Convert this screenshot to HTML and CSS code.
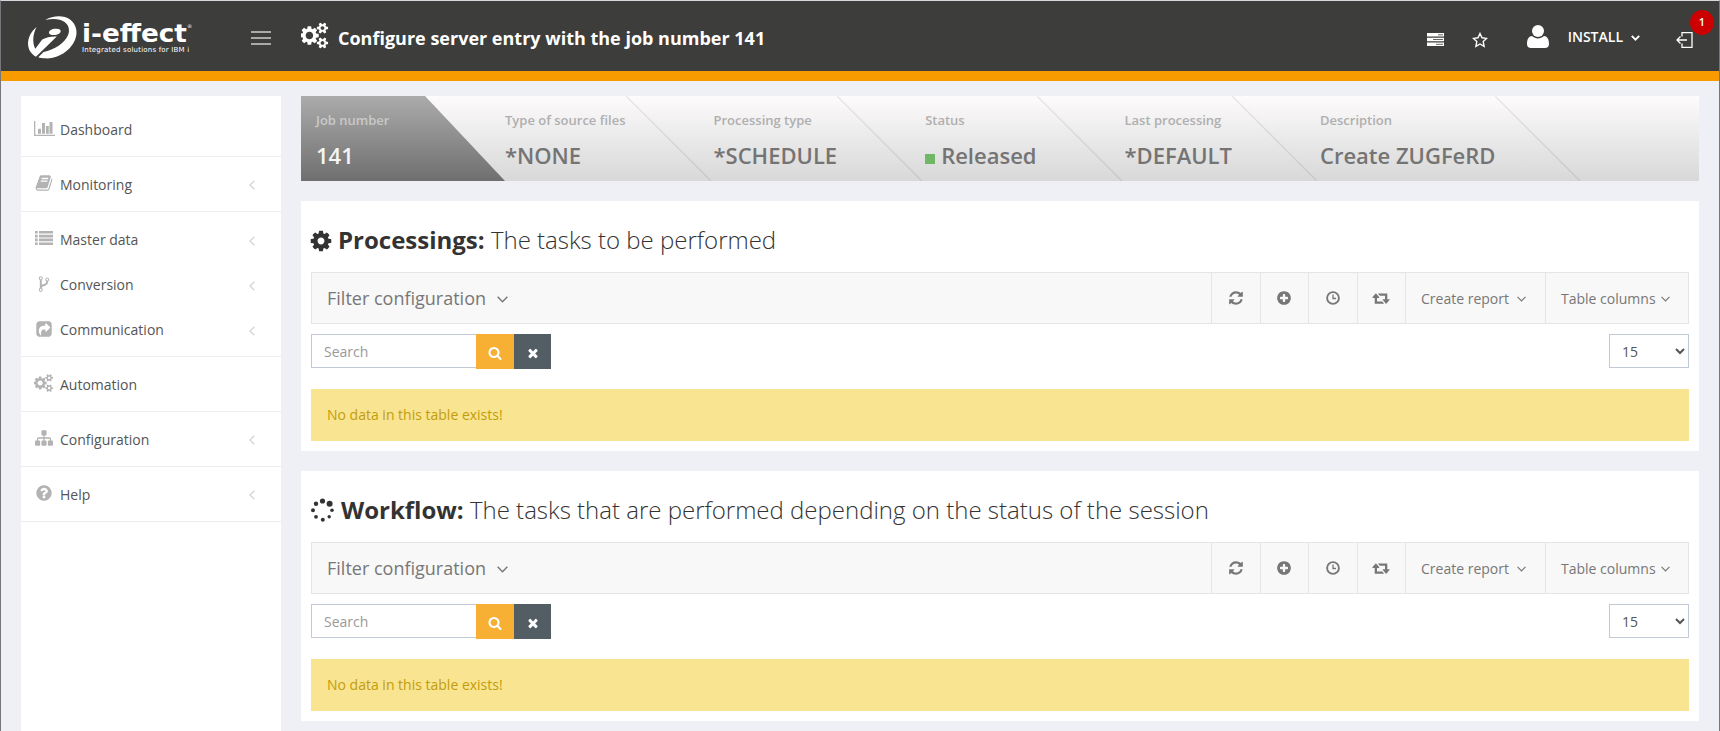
FILE: index.html
```html
<!DOCTYPE html>
<html lang="en">
<head>
    <meta charset="UTF-8">
    <meta name="viewport" content="width=device-width, initial-scale=1.0">
    <title>i-effect - Configure server entry</title>
    <link rel="stylesheet" href="styles.css">
</head>
<body>
    <svg width="0" height="0" class="sprite">
        <symbol id="cogs" viewBox="0 0 1920 1792"><path d="M832 896q0-106-75-181t-181-75-181 75-75 181 75 181 181 75 181-75 75-181zm768 512q0-52-38-90t-90-38-90 38-38 90q0 53 37.5 90.5t90.5 37.5 90.5-37.5 37.5-90.5zm0-1024q0-52-38-90t-90-38-90 38-38 90q0 53 37.5 90.5t90.5 37.5 90.5-37.5 37.5-90.5zm-384 421v185q0 10-7 19.5t-16 10.5l-155 24q-11 35-32 76 34 48 90 115 7 11 7 20 0 12-7 19-23 30-82.5 89.5t-78.5 59.5q-11 0-21-7l-115-90q-37 19-77 31-11 108-23 155-7 24-30 24h-186q-11 0-20-7.5t-10-17.5l-23-153q-34-10-75-31l-118 89q-7 7-20 7-11 0-21-8-144-133-144-160 0-9 7-19 10-14 41-53t47-61q-23-44-35-82l-152-24q-10-1-17-9.5t-7-19.5v-185q0-10 7-19.5t16-10.5l155-24q11-35 32-76-34-48-90-115-7-11-7-20 0-12 7-20 22-30 82-89t79-59q11 0 21 7l115 90q34-18 77-32 11-108 23-154 7-24 30-24h186q11 0 20 7.5t10 17.5l23 153q34 10 75 31l118-89q8-7 20-7 11 0 21 8 144 133 144 160 0 8-7 19-12 16-42 54t-45 60q23 48 34 82l152 23q10 2 17 10.5t7 19.5zm640 533v140q0 16-149 31-12 27-30 52 51 113 51 138 0 4-4 7-122 71-124 71-8 0-46-47t-52-68q-20 2-30 2t-30-2q-14 21-52 68t-46 47q-2 0-124-71-4-3-4-7 0-25 51-138-18-25-30-52-149-15-149-31v-140q0-16 149-31 13-29 30-52-51-113-51-138 0-4 4-7 4-2 35-20t59-34 30-16q8 0 46 46.5t52 67.5q20-2 30-2t30 2q51-71 92-112l6-2q4 0 124 70 4 3 4 7 0 25-51 138 17 23 30 52 149 15 149 31zm0-1024v140q0 16-149 31-12 27-30 52 51 113 51 138 0 4-4 7-122 71-124 71-8 0-46-47t-52-68q-20 2-30 2t-30-2q-14 21-52 68t-46 47q-2 0-124-71-4-3-4-7 0-25 51-138-18-25-30-52-149-15-149-31v-140q0-16 149-31 13-29 30-52-51-113-51-138 0-4 4-7 4-2 35-20t59-34 30-16q8 0 46 46.5t52 67.5q20-2 30-2t30 2q51-71 92-112l6-2q4 0 124 70 4 3 4 7 0 25-51 138 17 23 30 52 149 15 149 31z"/></symbol>
        <symbol id="cog" viewBox="0 0 1792 1792"><path d="M1152 896q0-106-75-181t-181-75-181 75-75 181 75 181 181 75 181-75 75-181zm512-109v222q0 12-8 23t-20 13l-185 28q-19 54-39 91 35 50 107 138 10 12 10 25t-9 23q-27 37-99 108t-94 71q-12 0-26-9l-138-108q-44 23-91 38-16 136-29 186-7 28-36 28h-222q-14 0-24.5-8.5t-11.5-21.5l-28-184q-49-16-90-37l-141 107q-10 9-25 9-14 0-25-11-126-114-165-168-7-10-7-23 0-12 8-23 15-21 51-66.5t54-70.5q-27-50-41-99l-183-27q-13-2-21-12.5t-8-23.5v-222q0-12 8-23t19-13l186-28q14-46 39-92-40-57-107-138-10-12-10-24 0-10 9-23 26-36 98.5-107.5t94.5-71.5q13 0 26 10l138 107q44-23 91-38 16-136 29-186 7-28 36-28h222q14 0 24.5 8.5t11.5 21.5l28 184q49 16 90 37l142-107q9-9 24-9 13 0 25 10 129 119 165 170 7 8 7 22 0 12-8 23-15 21-51 66.5t-54 70.5q26 50 41 98l183 28q13 2 21 12.5t8 23.5z"/></symbol>
        <symbol id="spinner" viewBox="0 0 24 24"><circle cx="11.5" cy="3" r="2.6"/><circle cx="18.6" cy="5.8" r="3"/><circle cx="21" cy="12.3" r="1.8"/><circle cx="18.2" cy="18.8" r="1.7"/><circle cx="11.8" cy="21.8" r="2"/><circle cx="5" cy="18.8" r="1.9"/><circle cx="2" cy="12.3" r="2"/><circle cx="5" cy="5.8" r="2.2"/></symbol>
        <symbol id="chart" viewBox="0 0 21 15"><path d="M0 0h1.3v13.7h19.7v1.3h-21zM4 7.8h3v5h-3zM8 2h3v10.8h-3zM12 5h2.8v7.8h-2.8zM15.5 1h3v11.8h-3z"/></symbol>
        <symbol id="book" viewBox="0 0 1792 1792"><path d="M1703 478q40 57 18 129l-275 906q-19 64-76.5 107.5t-122.5 43.5h-923q-77 0-148.5-53.5t-99.5-131.5q-24-67-2-127 0-4 3-27t4-37q1-8-3-21.5t-3-19.5q2-11 8-21t16.5-23.5 16.5-23.5q23-38 45-91.5t30-91.5q3-10 .5-30t-.5-28q3-11 17-28t17-23q21-36 42-92t25-90q1-9-2.5-32t.5-28q4-13 22-30.5t22-22.5q19-26 42.5-84.5t27.5-96.5q1-8-3-25.5t-2-26.5q2-8 9-18t18-23 17-21q8-12 16.5-30.5t15-35 16-36 19.5-32 26.5-23.5 36-11.5 47.5 5.5l-1 3q38-9 51-9h761q74 0 114 56t18 130l-274 906q-36 119-71.5 153.5t-128.5 34.5h-869q-27 0-38 15-11 16-1 43 24 70 144 70h923q29 0 56-15.5t35-41.5l300-987q7-22 5-57 38 15 59 43zm-1064 2q-4 13 2 22.5t20 9.5h608q13 0 25.5-9.5t16.5-22.5l21-64q4-13-2-22.5t-20-9.5h-608q-13 0-25.5 9.5t-16.5 22.5zm-83 256q-4 13 2 22.5t20 9.5h608q13 0 25.5-9.5t16.5-22.5l21-64q4-13-2-22.5t-20-9.5h-608q-13 0-25.5 9.5t-16.5 22.5z"/></symbol>
        <symbol id="list" viewBox="0 0 18 14"><path d="M0 0h2.7v2.6h-2.7zM4 0h14v2.6h-14zM0 3.8h2.7v2.6h-2.7zM4 3.8h14v2.6h-14zM0 7.6h2.7v2.6h-2.7zM4 7.6h14v2.6h-14zM0 11.4h2.7v2.6h-2.7zM4 11.4h14v2.6h-14z"/></symbol>
        <symbol id="fork" viewBox="0 0 1792 1792"><path d="M672 1472q0-40-28-68t-68-28-68 28-28 68 28 68 68 28 68-28 28-68zm0-1152q0-40-28-68t-68-28-68 28-28 68 28 68 68 28 68-28 28-68zm640 128q0-40-28-68t-68-28-68 28-28 68 28 68 68 28 68-28 28-68zm96 0q0 52-26 96.5t-70 69.5q-2 287-226 414-67 38-203 81-128 40-169.5 71t-41.5 100v26q44 25 70 69.5t26 96.5q0 80-56 136t-136 56-136-56-56-136q0-52 26-96.5t70-69.5v-820q-44-25-70-69.5t-26-96.5q0-80 56-136t136-56 136 56 56 136q0 52-26 96.5t-70 69.5v497q54-26 154-57 55-17 87.5-29.5t70.5-31 59-39.5 40.5-51 28-69.5 8.5-91.5q-44-25-70-69.5t-26-96.5q0-80 56-136t136-56 136 56 56 136z"/></symbol>
        <symbol id="share" viewBox="-128 0 1792 1792"><path d="M1005 1139l352-352q19-19 19-45t-19-45l-352-352q-30-31-69-14-40 17-40 59v160q-119 0-216 19.5t-162.5 51-114 79-76.5 95.5-44.5 109-21.5 111.5-5 110.5q0 181 167 404 11 12 25 12 7 0 13-3 22-9 19-33-44-354 62-473 46-52 130-75.5t224-23.5v160q0 42 40 59 12 5 24 5 26 0 45-19zm531-723v960q0 119-84.5 203.5t-203.5 84.5h-960q-119 0-203.5-84.5t-84.5-203.5v-960q0-119 84.5-203.5t203.5-84.5h960q119 0 203.5 84.5t84.5 203.5z"/></symbol>
        <symbol id="sitemap" viewBox="0 0 1792 1792"><path d="M1792 1248v320q0 40-28 68t-68 28h-320q-40 0-68-28t-28-68v-320q0-40 28-68t68-28h96v-192h-512v192h96q40 0 68 28t28 68v320q0 40-28 68t-68 28h-320q-40 0-68-28t-28-68v-320q0-40 28-68t68-28h96v-192h-512v192h96q40 0 68 28t28 68v320q0 40-28 68t-68 28h-320q-40 0-68-28t-28-68v-320q0-40 28-68t68-28h96v-192q0-52 38-90t90-38h512v-192h-96q-40 0-68-28t-28-68v-320q0-40 28-68t68-28h320q40 0 68 28t28 68v320q0 40-28 68t-68 28h-96v192h512q52 0 90 38t38 90v192h96q40 0 68 28t28 68z"/></symbol>
        <symbol id="question" viewBox="0 0 1792 1792"><path d="M1024 1376v-192q0-14-9-23t-23-9h-192q-14 0-23 9t-9 23v192q0 14 9 23t23 9h192q14 0 23-9t9-23zm256-672q0-88-55.5-163t-138.5-116-170-41q-243 0-371 213-15 24 8 42l132 100q7 6 19 6 16 0 25-12 53-68 86-92 34-24 86-24 48 0 85.5 26t37.5 59q0 38-20 61t-68 45q-63 28-115.5 86.5t-52.5 125.5v36q0 14 9 23t23 9h192q14 0 23-9t9-23q0-19 21.5-49.5t54.5-49.5q32-18 49-28.5t46-35 44.5-48 28-60.5 12.5-81zm384 192q0 209-103 385.5t-279.5 279.5-385.5 103-385.5-103-279.5-279.5-103-385.5 103-385.5 279.5-279.5 385.5-103 385.5 103 279.5 279.5 103 385.5z"/></symbol>
        <symbol id="refresh" viewBox="0 0 1792 1792"><path d="M1639 1056q0 5-1 7-64 268-268 434.5t-478 166.5q-146 0-282.5-55t-243.5-157l-129 129q-19 19-45 19t-45-19-19-45v-448q0-26 19-45t45-19h448q26 0 45 19t19 45-19 45l-137 137q71 66 161 102t187 36q134 0 250-65t186-179q11-17 53-117 8-23 30-23h192q13 0 22.5 9.5t9.5 22.5zm25-800v448q0 26-19 45t-45 19h-448q-26 0-45-19t-19-45 19-45l138-138q-148-137-349-137-134 0-250 65t-186 179q-11 17-53 117-8 23-30 23h-199q-13 0-22.5-9.5t-9.5-22.5v-7q65-268 270-434.5t480-166.5q146 0 284 55.5t245 156.5l130-129q19-19 45-19t45 19 19 45z"/></symbol>
        <symbol id="plus" viewBox="0 0 1792 1792"><path d="M1344 960v-128q0-26-19-45t-45-19h-256v-256q0-26-19-45t-45-19h-128q-26 0-45 19t-19 45v256h-256q-26 0-45 19t-19 45v128q0 26 19 45t45 19h256v256q0 26 19 45t45 19h128q26 0 45-19t19-45v-256h256q26 0 45-19t19-45zm320-64q0 209-103 385.5t-279.5 279.5-385.5 103-385.5-103-279.5-279.5-103-385.5 103-385.5 279.5-279.5 385.5-103 385.5 103 279.5 279.5 103 385.5z"/></symbol>
        <symbol id="clock" viewBox="0 0 16 16"><g fill="none" stroke="currentColor"><circle cx="8" cy="8" r="5.9" stroke-width="1.9"/><path d="M8 4.5v4h3" stroke-width="1.3"/></g></symbol>
        <symbol id="retweet" viewBox="0 0 1920 1792"><path d="M1280 1504q0 13-9.5 22.5t-22.5 9.5h-960q-8 0-13.5-2t-9-7-5.5-8-3-11.5-1-11.5v-600h-192q-26 0-45-19t-19-45q0-24 15-41l320-384q19-22 49-22t49 22l320 384q15 17 15 41 0 26-19 45t-45 19h-192v384h576q16 0 25 11l160 192q7 10 7 21zm640-416q0 24-15 41l-320 384q-20 23-49 23t-49-23l-320-384q-15-17-15-41 0-26 19-45t45-19h192v-384h-576q-16 0-25-12l-160-192q-7-9-7-20 0-13 9.5-22.5t22.5-9.5h960q8 0 13.5 2t9 7 5.5 8 3 11.5 1 11.5v600h192q26 0 45 19t19 45z"/></symbol>
        <symbol id="search" viewBox="0 0 1792 1792"><path d="M1216 832q0-185-131.5-316.5t-316.5-131.5-316.5 131.5-131.5 316.5 131.5 316.5 316.5 131.5 316.5-131.5 131.5-316.5zm512 832q0 52-38 90t-90 38q-54 0-90-38l-343-342q-179 124-399 124-143 0-273.5-55.5t-225-150-150-225-55.5-273.5 55.5-273.5 150-225 225-150 273.5-55.5 273.5 55.5 225 150 150 225 55.5 273.5q0 220-124 399l343 343q37 37 37 90z"/></symbol>
        <symbol id="times" viewBox="0 0 1792 1792"><path d="M1490 1322q0 40-28 68l-136 136q-28 28-68 28t-68-28l-294-294-294 294q-28 28-68 28t-68-28l-136-136q-28-28-28-68t28-68l294-294-294-294q-28-28-28-68t28-68l136-136q28-28 68-28t68 28l294 294 294-294q28-28 68-28t68 28l136 136q28 28 28 68t-28 68l-294 294 294 294q28 28 28 68z"/></symbol>
        <symbol id="down" viewBox="0 0 10 6"><path d="M.6.6l4.4 4.4 4.4-4.4" fill="none" stroke="currentColor" stroke-width="1.3"/></symbol>
        <symbol id="left" viewBox="0 0 6 10"><path d="M5.4.8l-4.4 4.200 4.400 4.200" fill="none" stroke="currentColor" stroke-width="1.300"/></symbol>
        <symbol id="slash" viewBox="0 0 85 85"><path d="M0 0l85 85" fill="none" stroke="#000" stroke-opacity=".08" stroke-width="1.4"/></symbol>
    </svg>

    <header class="topbar">
        <div class="logo">
            <svg class="logo-mark" viewBox="24 23 148 128">
                <path d="M50 55C20 78 12 126 48 145L111 84C95 83 80 86 67 93L46 121C36 100 39 76 50 55z"/>
                <path d="M76 34C112 14 162 20 170 64C176 106 130 153 76 150C68 150 60 149 55 147L71 131C103 124 136 104 146 77C156 42 122 23 76 34z"/>
                <ellipse cx="105" cy="70" rx="18" ry="9.5" transform="rotate(-8 105 70)"/>
            </svg>
            <div class="logo-text">
                <div class="logo-name">i-effect<sup>®</sup></div>
                <div class="logo-sub">Integrated solutions for IBM i</div>
            </div>
        </div>
        <div class="burger"><span></span><span></span><span></span></div>
        <h1 class="page-title"><svg class="title-icon"><use href="#cogs"/></svg>Configure server entry with the job number 141</h1>
        <div class="tools">
            <svg class="tool-server" viewBox="0 0 17 13"><path d="M0 0h17v3.4h-17zM0 4.8h17v3.4h-17zM0 9.6h17v3.4h-17z"/><path d="M11 1.800h5M6 6.500h10M9 11.300h7" stroke="#3d3d3b" stroke-width=".8"/></svg>
            <svg class="tool-star" viewBox="0 0 16 16"><path d="M8 1.500l2 4.300 4.600.6-3.400 3.200.9 4.700L8 12l-4.100 2.300.9-4.700L1.400 6.400 6 5.800z" fill="none" stroke="currentColor" stroke-width="1.4"/></svg>
            <svg class="tool-user" viewBox="0 0 22 23"><path d="M5 11C1.500 11.500 0 14.500 0 19c0 2.500 1.500 4 4 4h14c2.500 0 4-1.500 4-4 0-4.500-1.500-7.500-5-8-3.500 3.300-8.500 3.300-12 0z"/><circle cx="11" cy="6" r="6"/></svg>
            <span class="user-name">INSTALL</span>
            <svg class="user-arrow" viewBox="0 0 9 6"><path d="M.8.900l3.700 3.700 3.700-3.700" fill="none" stroke="currentColor" stroke-width="1.9"/></svg>
            <div class="logout">
                <svg viewBox="0 0 17 16"><path d="M6 4.500v-4h10v15h-10v-4M11 8h-10M4.500 4.500l-3.500 3.500 3.500 3.500" fill="none" stroke="currentColor" stroke-width="1.3"/></svg>
                <span class="badge">1</span>
            </div>
        </div>
    </header>

    <div class="page">
        <nav class="sidebar">
            <div class="menu-item first line"><svg class="chart"><use href="#chart"/></svg><span>Dashboard</span></div>
            <div class="menu-item tall line"><svg><use href="#book"/></svg><span>Monitoring</span><svg class="arrow"><use href="#left"/></svg></div>
            <div class="menu-item tall-top"><svg class="list"><use href="#list"/></svg><span>Master data</span><svg class="arrow"><use href="#left"/></svg></div>
            <div class="menu-item"><svg><use href="#fork"/></svg><span>Conversion</span><svg class="arrow"><use href="#left"/></svg></div>
            <div class="menu-item tall-bottom line"><svg><use href="#share"/></svg><span>Communication</span><svg class="arrow"><use href="#left"/></svg></div>
            <div class="menu-item tall line"><svg><use href="#cogs"/></svg><span>Automation</span></div>
            <div class="menu-item tall line"><svg><use href="#sitemap"/></svg><span>Configuration</span><svg class="arrow"><use href="#left"/></svg></div>
            <div class="menu-item tall line"><svg><use href="#question"/></svg><span>Help</span><svg class="arrow"><use href="#left"/></svg></div>
        </nav>

        <main class="content">
            <div class="steps">
                <div class="step active"><div><small>Job number</small><b>141</b></div></div>
                <div class="step"><div><small>Type of source files</small><b>*NONE</b></div><svg><use href="#slash"/></svg></div>
                <div class="step"><div><small>Processing type</small><b>*SCHEDULE</b></div><svg><use href="#slash"/></svg></div>
                <div class="step"><div><small>Status</small><b><i class="status"></i>Released</b></div><svg><use href="#slash"/></svg></div>
                <div class="step"><div><small>Last processing</small><b>*DEFAULT</b></div><svg><use href="#slash"/></svg></div>
                <div class="step"><div><small>Description</small><b>Create ZUGFeRD</b></div><svg><use href="#slash"/></svg></div>
            </div>

            <section class="panel">
                <h2><svg class="cog"><use href="#cog"/></svg><strong>Processings:</strong> The tasks to be performed</h2>
                <div class="toolbar">
                    <div class="filter">Filter configuration<svg><use href="#down"/></svg></div>
                    <div class="tool"><svg><use href="#refresh"/></svg></div>
                    <div class="tool"><svg><use href="#plus"/></svg></div>
                    <div class="tool"><svg><use href="#clock"/></svg></div>
                    <div class="tool"><svg class="wide"><use href="#retweet"/></svg></div>
                    <div class="drop report">Create report<svg><use href="#down"/></svg></div>
                    <div class="drop columns">Table columns<svg><use href="#down"/></svg></div>
                </div>
                <div class="search-row">
                    <input type="text" placeholder="Search">
                    <button class="btn-search"><svg><use href="#search"/></svg></button>
                    <button class="btn-clear"><svg><use href="#times"/></svg></button>
                    <select><option>15</option></select>
                </div>
                <div class="alert">No data in this table exists!</div>
            </section>

            <section class="panel">
                <h2><svg class="spin"><use href="#spinner"/></svg><strong>Workflow:</strong> The tasks that are performed depending on the status of the session</h2>
                <div class="toolbar">
                    <div class="filter">Filter configuration<svg><use href="#down"/></svg></div>
                    <div class="tool"><svg><use href="#refresh"/></svg></div>
                    <div class="tool"><svg><use href="#plus"/></svg></div>
                    <div class="tool"><svg><use href="#clock"/></svg></div>
                    <div class="tool"><svg class="wide"><use href="#retweet"/></svg></div>
                    <div class="drop report">Create report<svg><use href="#down"/></svg></div>
                    <div class="drop columns">Table columns<svg><use href="#down"/></svg></div>
                </div>
                <div class="search-row">
                    <input type="text" placeholder="Search">
                    <button class="btn-search"><svg><use href="#search"/></svg></button>
                    <button class="btn-clear"><svg><use href="#times"/></svg></button>
                    <select><option>15</option></select>
                </div>
                <div class="alert">No data in this table exists!</div>
            </section>
        </main>
    </div>
</body>
</html>
```

FILE: styles.css
```css
* {
    box-sizing: border-box;
}
body {
    margin: 0;
    height: 731px;
    overflow: hidden;
    background-color: #eff0f5;
    border-top: 1px solid #d5d9dc;
    border-left: 1px solid #77777b;
    border-right: 1px solid #77777b;
    font-family: "Open Sans", sans-serif;
    font-size: 14px;
    color: #555;
}
svg {
    fill: currentColor;
    flex: none;
}
.sprite {
    position: absolute;
}

/* header */
.topbar {
    display: flex;
    align-items: center;
    height: 80px;
    background-color: #3d3d3b;
    border-bottom: 10px solid #f79b00;
    color: #fff;
}
.logo {
    display: flex;
    width: 223px;
    height: 43px;
    padding-left: 27px;
    margin-top: 2px;
}
.logo-mark {
    width: 49px;
    height: 43px;
}
.logo-text {
    margin: 6px 0 0 5px;
    white-space: nowrap;
    font-family: "DejaVu Sans", sans-serif;
}
.logo-name {
    height: 24px;
    line-height: 24px;
    font-size: 25px;
    font-weight: bold;
    transform: scaleX(1.05);
    transform-origin: left;
}
.logo-name sup {
    display: inline-block;
    font-size: 5px;
    line-height: 5px;
    vertical-align: 14px;
    font-weight: normal;
}
.logo-sub {
    height: 9px;
    line-height: 9px;
    font-size: 7px;
    letter-spacing: 0.2px;
}
.burger {
    display: flex;
    flex-direction: column;
    gap: 4px;
    width: 20px;
    margin: 4px 0 0 27px;
}
.burger span {
    height: 2px;
    background-color: #a9a9a8;
}
.page-title {
    display: flex;
    align-items: center;
    margin: 4px 0 0 30px;
    font-size: 18px;
    font-weight: 700;
}
.title-icon {
    width: 28px;
    height: 27px;
    margin: -6px 9px 0 0;
}
.tools {
    display: flex;
    align-items: center;
    margin: 7px 26px 0 auto;
}
.tool-server {
    width: 17px;
    height: 13px;
}
.tool-star {
    width: 16px;
    height: 16px;
    margin-left: 28px;
}
.tool-user {
    width: 22px;
    height: 23px;
    margin: -6px 19px 0 39px;
}
.user-name {
    font-size: 14px;
    font-weight: 600;
    margin-top: -7px;
}
.user-arrow {
    width: 9px;
    height: 6px;
    margin: -4px 36px 0 8px;
}
.logout {
    position: relative;
    height: 16px;
}
.logout svg {
    display: block;
    width: 17px;
    height: 16px;
}
.badge {
    position: absolute;
    left: 14px;
    top: -22px;
    width: 24px;
    height: 25px;
    border-radius: 50%;
    background-color: #c00;
    font-size: 11px;
    font-weight: 600;
    line-height: 24px;
    text-align: center;
}

/* layout */
.page {
    display: flex;
    gap: 20px;
    padding: 15px 20px 0;
}
.sidebar {
    width: 260px;
    height: 660px;
    flex: none;
    padding-top: 10px;
    background-color: #fff;
}
.content {
    flex: 1;
    min-width: 0;
}

/* menu */
.menu-item {
    display: flex;
    align-items: center;
    height: 45px;
    padding: 0 26px 0 13px;
}
.menu-item.line {
    border-bottom: 1px solid #ededef;
}
.menu-item.first {
    height: 51px;
    padding-bottom: 4px;
}
.menu-item.tall {
    height: 55px;
}
.menu-item.tall-top {
    height: 50px;
    padding-top: 5px;
}
.menu-item.tall-bottom {
    height: 50px;
    padding-bottom: 4px;
}
.menu-item svg {
    width: 20px;
    height: 18px;
    margin: -2px 6px 0 0;
    color: #b3b3b3;
}
.menu-item svg.chart {
    width: 21px;
    height: 15px;
    margin-right: 5px;
}
.menu-item svg.list {
    height: 14px;
    margin-top: -3px;
}
.menu-item svg.arrow {
    width: 6px;
    height: 10px;
    margin: 2px 0 0 auto;
    color: #d4d4d4;
}

/* steps */
.steps {
    display: flex;
    height: 85px;
    background: linear-gradient(#fdfbfc, #d8d8d8);
}
.step {
    display: flex;
    margin-right: 3px;
    color: #747474;
}
.step > div {
    padding-top: 15px;
}
.step svg {
    width: 85px;
    height: 85px;
}
.step small {
    display: block;
    font-size: 13px;
    font-weight: 600;
    line-height: 18px;
    color: #afafaf;
}
.step b {
    display: block;
    margin-top: 11px;
    font-size: 22px;
    font-weight: 600;
    line-height: 30px;
}
.step.active {
    width: 204px;
    margin-right: 0;
    padding-left: 15px;
    background: linear-gradient(#ababab, #6f6f6f);
    clip-path: polygon(0 0, 124px 0, 204px 100%, 0 100%);
    color: #f5f5f5;
}
.step.active small {
    color: #c9c9c9;
}
.status {
    display: inline-block;
    width: 10px;
    height: 10px;
    margin-right: 6px;
    background-color: #70b865;
}

/* panels */
.panel {
    height: 250px;
    margin-top: 20px;
    padding: 20px 10px 10px;
    background-color: #fff;
}
.panel h2 {
    display: flex;
    align-items: center;
    height: 36px;
    margin: 0 0 15px;
    font-size: 24px;
    font-weight: 300;
    color: #333;
    white-space: pre;
}
.panel h2 strong {
    font-weight: 700;
}
.panel h2 svg.cog {
    width: 24px;
    height: 24px;
    margin: 3px 5px 0 -2px;
}
.panel h2 svg.spin {
    width: 24px;
    height: 24px;
    margin: 1px 6px 0 0;
}
.toolbar {
    display: flex;
    height: 52px;
    border: 1px solid #e5e5e5;
    background-color: #f8f8f8;
    color: #777;
}
.toolbar > div {
    display: flex;
    align-items: center;
}
.filter {
    flex: 1;
    padding-left: 15px;
    font-size: 18px;
}
.filter svg {
    width: 11px;
    height: 7px;
    margin: 2px 0 0 11px;
}
.tool {
    justify-content: center;
    width: 48.5px;
    border-left: 1px solid #e5e5e5;
}
.tool svg {
    width: 16px;
    height: 16px;
}
.tool svg.wide {
    width: 18px;
}
.drop {
    padding-left: 15px;
    border-left: 1px solid #e5e5e5;
}
.drop.report {
    width: 140px;
}
.drop.columns {
    width: 143px;
}
.drop svg {
    width: 9px;
    height: 6px;
    margin: 1px 0 0 8px;
}
.drop.columns svg {
    margin-left: 5px;
}
.search-row {
    display: flex;
    height: 35px;
    margin-top: 10px;
}
.search-row input {
    width: 165px;
    height: 34px;
    padding: 0 12px;
    border: 1px solid #c2cad8;
    border-right: 0;
    font: 14px "Open Sans", sans-serif;
}
.search-row input::placeholder {
    color: #999;
}
.search-row button {
    display: flex;
    align-items: center;
    justify-content: center;
    width: 38px;
    padding: 2px 0 0;
    border: 0;
    background-color: #f7b034;
    color: #fff;
}
.search-row button.btn-clear {
    width: 37px;
    background-color: #525e64;
}
.search-row button svg {
    width: 14px;
    height: 14px;
}
.search-row select {
    width: 80px;
    height: 34px;
    margin-left: auto;
    padding: 0 2px 0 8px;
    border: 1px solid #c2cad8;
    border-radius: 0;
    background-color: #fff;
    color: #555;
    font: 14px "Open Sans", sans-serif;
}
.alert {
    height: 52px;
    margin-top: 20px;
    padding-left: 16px;
    line-height: 51px;
    background-color: #f9e491;
    color: #c29d0b;
}
```
